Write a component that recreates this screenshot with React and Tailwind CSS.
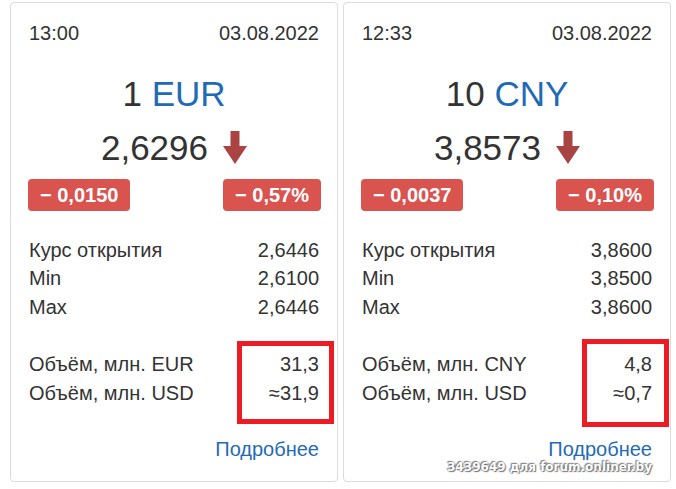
import React from "react";

const cards = [
  {
    time: "13:00",
    date: "03.08.2022",
    amount: "1",
    cur: "EUR",
    rate: "2,6296",
    diff: "− 0,0150",
    pct: "− 0,57%",
    rows: [
      ["Курс открытия", "2,6446"],
      ["Min", "2,6100"],
      ["Max", "2,6446"],
    ],
    vol: [
      ["Объём, млн. EUR", "31,3"],
      ["Объём, млн. USD", "≈31,9"],
    ],
  },
  {
    time: "12:33",
    date: "03.08.2022",
    amount: "10",
    cur: "CNY",
    rate: "3,8573",
    diff: "− 0,0037",
    pct: "− 0,10%",
    rows: [
      ["Курс открытия", "3,8600"],
      ["Min", "3,8500"],
      ["Max", "3,8600"],
    ],
    vol: [
      ["Объём, млн. CNY", "4,8"],
      ["Объём, млн. USD", "≈0,7"],
    ],
  },
];

function Arrow() {
  return (
    <svg width="24" height="33" viewBox="0 0 24 33" className="inline-block">
      <rect x="7.5" y="0" width="9" height="16" fill="#a94442" />
      <polygon points="0,15 24,15 12,33" fill="#a94442" />
    </svg>
  );
}

function Card({ c, box }) {
  return (
    <div className="relative flex-1 h-[480px] border border-[#dcdcdc] rounded-[4px] bg-white px-[18px] pt-[16px] flex flex-col">
      <div className="flex justify-between leading-[28.5px]">
        <span>{c.time}</span>
        <span>{c.date}</span>
      </div>
      <div className="mt-[27px] text-center text-[35px] leading-[37px]">
        {c.amount} <span className="text-[#1f6bb5]">{c.cur}</span>
      </div>
      <div className="mt-[17px] flex items-center justify-center gap-[15px] text-[35px] leading-[37px]">
        <span>{c.rate}</span>
        <Arrow />
      </div>
      <div className="mt-[13px] flex justify-between">
        <span className="h-[32px] px-[12px] flex items-center rounded-[4px] bg-[#d9534f] text-white font-bold -ml-[1px]">
          {c.diff}
        </span>
        <span className="h-[32px] px-[12px] flex items-center rounded-[4px] bg-[#d9534f] text-white font-bold -mr-[2px]">
          {c.pct}
        </span>
      </div>
      <div className="mt-[25px] flex flex-col">
        {c.rows.map(([k, v]) => (
          <div key={k} className="flex justify-between leading-[28.5px]">
            <span>{k}</span>
            <span>{v}</span>
          </div>
        ))}
      </div>
      <div className="mt-[29px] flex flex-col">
        {c.vol.map(([k, v]) => (
          <div key={k} className="flex justify-between leading-[28.5px]">
            <span>{k}</span>
            <span>{v}</span>
          </div>
        ))}
      </div>
      <div className="mt-[28px] flex justify-end leading-[28.5px]">
        <span className="text-[#1f6bb5]">Подробнее</span>
      </div>
      <div
        className="absolute border-[5px] border-[#ed1c24]"
        style={box}
      />
    </div>
  );
}

export default function App() {
  return (
    <div
      className="relative w-[676px] h-[489px] bg-white text-[#333] text-[20px] overflow-hidden"
      style={{ fontFamily: '"Liberation Sans", Arial, sans-serif' }}
    >
      <div className="flex gap-[5px] pl-[10px] pr-[5px] pt-[2px]">
        <Card c={cards[0]} box={{ left: 226, top: 338, width: 97, height: 83 }} />
        <Card c={cards[1]} box={{ left: 238, top: 336, width: 87, height: 88 }} />
      </div>
      <div
        className="absolute right-[24px] top-[459px] text-white font-bold text-[12px] leading-[16px] [text-shadow:0_0_2px_#666,1px_1px_1px_#777,-1px_-1px_1px_#888]"
        style={{ fontFamily: '"DejaVu Sans", Verdana, sans-serif' }}
      >
        3439649 для forum.onliner.by
      </div>
    </div>
  );
}
